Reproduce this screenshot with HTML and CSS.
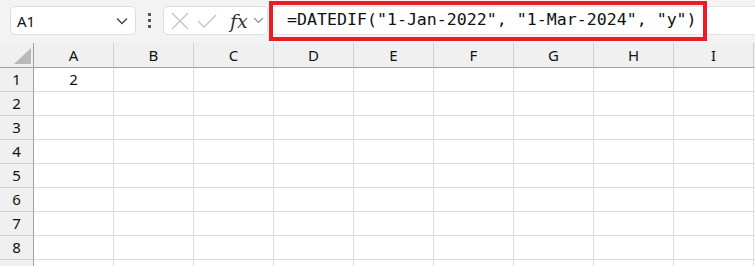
FILE: index.html
```html
<!DOCTYPE html>
<html lang="en">
<head>
    <meta charset="UTF-8">
    <title>Sheet</title>
    <link rel="stylesheet" href="styles.css">
</head>
<body>
    <div class="toolbar">
        <div class="namebox">
            <span>A1</span>
            <svg width="12" height="8" viewBox="0 0 12 8"><path d="M1 1.5 L6 6.5 L11 1.5" fill="none" stroke="#444" stroke-width="1.3"/></svg>
        </div>
        <div class="dots"><i></i><i></i><i></i></div>
        <div class="fxbox">
            <svg width="18" height="18" viewBox="0 0 18 18"><path d="M1 1 L17 17 M17 1 L1 17" stroke="#c4c4c4" stroke-width="1.3"/></svg>
            <svg width="20" height="16" viewBox="0 0 20 16"><path d="M1 8 L7 14 L19 2" fill="none" stroke="#c4c4c4" stroke-width="1.3"/></svg>
            <span class="fx">fx</span>
            <svg width="11" height="7" viewBox="0 0 11 7"><path d="M1 1 L5.5 5.5 L10 1" fill="none" stroke="#888" stroke-width="1.1"/></svg>
        </div>
        <div class="formula">=DATEDIF("1-Jan-2022", "1-Mar-2024", "y")</div>
        <div class="highlight"></div>
    </div>

    <div class="grid">
        <div class="corner"><span class="tri"></span></div>
        <div class="colhead">A</div>
        <div class="colhead">B</div>
        <div class="colhead">C</div>
        <div class="colhead">D</div>
        <div class="colhead">E</div>
        <div class="colhead">F</div>
        <div class="colhead">G</div>
        <div class="colhead">H</div>
        <div class="colhead">I</div>
        <div class="colhead"></div>
    </div>
    <div class="grid" id="rows"></div>

    <script>
        const rows = document.getElementById('rows');
        let html = '';
        for (let r = 1; r <= 8; r++) {
            html += `<div class="rowhead">${r}</div>`;
            for (let c = 0; c < 10; c++) {
                const val = (r === 1 && c === 0) ? '2' : '';
                html += `<div class="cell">${val}</div>`;
            }
        }
        // last row only peeks in at the bottom edge
        html += '<div class="rowhead"></div>';
        for (let c = 0; c < 10; c++) html += '<div class="cell"></div>';
        rows.innerHTML = html;
    </script>
</body>
</html>
```

FILE: styles.css
```css
body {
    margin: 0;
    width: 755px;
    height: 266px;
    overflow: hidden;
    background: #fff;
    font-family: "Noto Sans", "Open Sans", sans-serif;
    color: #222;
}
.toolbar {
    position: relative;
    display: flex;
    align-items: flex-start;
    height: 43px;
    padding: 6px 0 0 10px;
    box-sizing: border-box;
    background: #f3f3f3;
}
.namebox {
    width: 126px;
    height: 29px;
    box-sizing: border-box;
    display: flex;
    align-items: center;
    justify-content: space-between;
    padding: 0 7px 0 6px;
    background: #fff;
    border: 1px solid #dedede;
    border-radius: 5px;
    font-size: 15px;
    color: #111;
}
.dots {
    width: 27px;
    height: 29px;
    display: flex;
    flex-direction: column;
    align-items: center;
    justify-content: center;
    gap: 3px;
}
.dots i {
    width: 3px;
    height: 3px;
    background: #555;
}
.fxbox {
    width: 105px;
    height: 29px;
    box-sizing: border-box;
    display: flex;
    align-items: center;
    gap: 8px;
    padding-left: 7px;
    background: #fff;
    border: 1px solid #dedede;
    border-radius: 5px;
}
.fx {
    font-family: "DejaVu Serif", "Liberation Serif", serif;
    font-style: italic;
    font-size: 19px;
    color: #333;
    margin-left: 5px;
    margin-right: -3px;
}
.formula {
    flex: 1;
    height: 29px;
    box-sizing: border-box;
    margin-left: 1px;
    padding: 3px 0 0 18px;
    background: #fff;
    border-top: 1px solid #e4e4e4;
    border-bottom: 1px solid #e4e4e4;
    font-family: "DejaVu Sans Mono", "Liberation Mono", monospace;
    font-size: 16.6px;
    color: #111;
    white-space: nowrap;
}
.highlight {
    position: absolute;
    left: 269px;
    top: 1px;
    width: 438px;
    height: 40px;
    box-sizing: border-box;
    border: 4px solid #ec1c24;
}
.grid {
    display: grid;
    grid-template-columns: 34px repeat(10, 80px);
}
.corner, .colhead {
    height: 25px;
    box-sizing: border-box;
    background: #f0f0f0;
    border-bottom: 1px solid #a0a0a0;
}
.corner {
    position: relative;
    border-right: 1px solid #a0a0a0;
}
.tri {
    position: absolute;
    right: 2px;
    bottom: 3px;
    width: 0;
    height: 0;
    border-left: 17px solid transparent;
    border-bottom: 16px solid #b9b9b9;
}
.colhead {
    border-right: 1px solid #cfcfcf;
    text-align: center;
    font-size: 15px;
    line-height: 24px;
    color: #111;
}
.rowhead, .cell {
    height: 24px;
    box-sizing: border-box;
    border-bottom: 1px solid #dcdcdc;
    font-size: 15px;
    line-height: 23px;
    text-align: center;
}
.rowhead {
    background: #f0f0f0;
    border-right: 1px solid #a0a0a0;
    border-bottom-color: #cfcfcf;
    color: #111;
}
.cell {
    border-right: 1px solid #dcdcdc;
    color: #111;
}
```
